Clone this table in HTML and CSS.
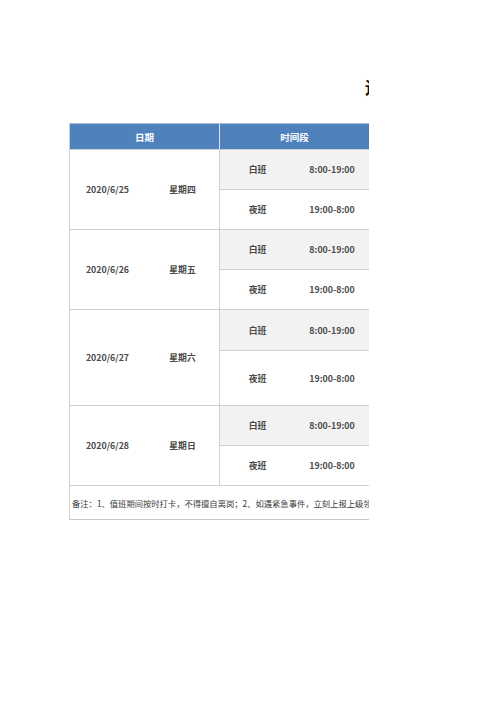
FILE: index.html
```html
<!DOCTYPE html>
<html lang="zh-CN">
<head>
<meta charset="utf-8">
<title>值班表</title>
<link rel="stylesheet" href="styles.css">
</head>
<body>
<div class="sheet">
  <div class="title-row"><h1 class="title">运维值班表</h1></div>
  <div class="table">
    <div class="row head">
      <div class="hcell w2">日期</div>
      <div class="hcell w2">时间段</div>
      <div class="hcell w2"></div>
    </div>

    <div class="group">
      <div class="date-part h80">
        <div class="cell w1 bold">2020/6/25</div>
        <div class="cell w1 bold">星期四</div>
      </div>
      <div class="shifts">
        <div class="row shift day h40">
          <div class="cell w1 bold">白班</div><div class="cell w1 bold">8:00-19:00</div><div class="cell w2"></div>
        </div>
        <div class="row shift h40">
          <div class="cell w1 bold">夜班</div><div class="cell w1 bold">19:00-8:00</div><div class="cell w2"></div>
        </div>
      </div>
    </div>

    <div class="group">
      <div class="date-part h80">
        <div class="cell w1 bold">2020/6/26</div>
        <div class="cell w1 bold">星期五</div>
      </div>
      <div class="shifts">
        <div class="row shift day h40">
          <div class="cell w1 bold">白班</div><div class="cell w1 bold">8:00-19:00</div><div class="cell w2"></div>
        </div>
        <div class="row shift h40">
          <div class="cell w1 bold">夜班</div><div class="cell w1 bold">19:00-8:00</div><div class="cell w2"></div>
        </div>
      </div>
    </div>

    <div class="group">
      <div class="date-part h96">
        <div class="cell w1 bold">2020/6/27</div>
        <div class="cell w1 bold">星期六</div>
      </div>
      <div class="shifts">
        <div class="row shift day h41">
          <div class="cell w1 bold">白班</div><div class="cell w1 bold">8:00-19:00</div><div class="cell w2"></div>
        </div>
        <div class="row shift h55">
          <div class="cell w1 bold">夜班</div><div class="cell w1 bold">19:00-8:00</div><div class="cell w2"></div>
        </div>
      </div>
    </div>

    <div class="group">
      <div class="date-part h80">
        <div class="cell w1 bold">2020/6/28</div>
        <div class="cell w1 bold">星期日</div>
      </div>
      <div class="shifts">
        <div class="row shift day h40">
          <div class="cell w1 bold">白班</div><div class="cell w1 bold">8:00-19:00</div><div class="cell w2"></div>
        </div>
        <div class="row shift h40">
          <div class="cell w1 bold">夜班</div><div class="cell w1 bold">19:00-8:00</div><div class="cell w2"></div>
        </div>
      </div>
    </div>

    <div class="row note">
      <div class="note-cell">备注：1、值班期间按时打卡，不得擅自离岗；2、如遇紧急事件，立刻上报上级领导。</div>
    </div>
  </div>
</div>
</body>
</html>
```

FILE: styles.css
```css
* { box-sizing: border-box; }
html, body { margin: 0; padding: 0; background: #ffffff; }
body {
  font-family: "Noto Sans CJK SC", "Noto Sans", sans-serif;
  color: #333333;
}
.sheet {
  margin-left: 69px;
  width: 300px;
  overflow: hidden;
}
.title-row {
  height: 123px;
  padding-top: 76px;
  padding-left: 296px;
  white-space: nowrap;
}
.title {
  margin: 0;
  font-size: 17px;
  line-height: 22px;
  font-weight: bold;
  color: #111111;
}
.table {
  width: 450px;
  border-left: 1px solid #d0d0d0;
}
.row { display: flex; }
.head {
  height: 27px;
  background: #4f81bd;
  border-top: 1px solid #a9bfd8;
  border-bottom: 1px solid #d0d0d0;
}
.hcell {
  display: flex;
  align-items: center;
  justify-content: center;
  color: #ffffff;
  font-size: 9.5px;
  font-weight: bold;
  border-right: 1px solid #dfe8f3;
}
.w1 { width: 75px; flex: none; }
.w2 { width: 150px; flex: none; }
.group { display: flex; }
.date-part {
  display: flex;
  border-bottom: 1px solid #d0d0d0;
  border-right: 1px solid #d0d0d0;
  width: 150px;
  flex: none;
}
.shifts { display: flex; flex-direction: column; }
.cell {
  display: flex;
  align-items: center;
  justify-content: center;
  font-size: 8.8px;
  color: #4a4a4a;
  white-space: nowrap;
}
.bold { font-weight: bold; }
.shift { border-bottom: 1px solid #d0d0d0; }
.shift .cell:nth-child(2) { border-right: 1px solid #d6d6d6; }
.day { background: #f2f2f2; }
.h40 { height: 40px; }
.h41 { height: 41px; }
.h55 { height: 55px; }
.h80 { height: 80px; }
.h96 { height: 96px; }
.note {
  height: 34px;
  border-bottom: 1px solid #c8c8c8;
}
.note-cell {
  display: flex;
  align-items: center;
  padding-left: 2px;
  font-size: 8.3px;
  color: #3a3a3a;
  white-space: nowrap;
}
```
